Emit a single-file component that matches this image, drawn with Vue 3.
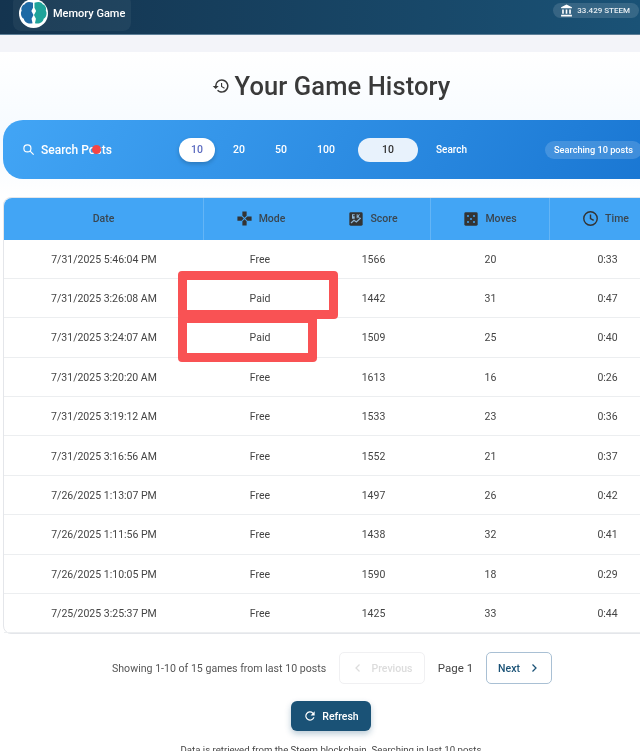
<script setup>
const rows = [
  { date: '7/31/2025 5:46:04 PM', mode: 'Free', score: 1566, moves: 20, time: '0:33' },
  { date: '7/31/2025 3:26:08 AM', mode: 'Paid', score: 1442, moves: 31, time: '0:47' },
  { date: '7/31/2025 3:24:07 AM', mode: 'Paid', score: 1509, moves: 25, time: '0:40' },
  { date: '7/31/2025 3:20:20 AM', mode: 'Free', score: 1613, moves: 16, time: '0:26' },
  { date: '7/31/2025 3:19:12 AM', mode: 'Free', score: 1533, moves: 23, time: '0:36' },
  { date: '7/31/2025 3:16:56 AM', mode: 'Free', score: 1552, moves: 21, time: '0:37' },
  { date: '7/26/2025 1:13:07 PM', mode: 'Free', score: 1497, moves: 26, time: '0:42' },
  { date: '7/26/2025 1:11:56 PM', mode: 'Free', score: 1438, moves: 32, time: '0:41' },
  { date: '7/26/2025 1:10:05 PM', mode: 'Free', score: 1590, moves: 18, time: '0:29' },
  { date: '7/25/2025 3:25:37 PM', mode: 'Free', score: 1425, moves: 33, time: '0:44' }
]
const counts = [10, 20, 50, 100]
const lobe = 'M14.500 4C10 2 6.500 3.500 6 5.500 3 6.500 1.800 10 2.800 12 1 15 2.500 19.500 5 20.500 5.500 24 10 26.500 14 25L13 20.500l2-4-2.200-4 1.700-3.500z'
</script>

<template>
  <div class="page">
    <header class="topbar">
      <div class="brand">
        <svg class="logo" viewBox="0 0 30 30" width="29" height="29">
          <circle cx="15" cy="15" r="15" fill="#fff" />
          <path :d="lobe" fill="#1e6aa5" />
          <path :d="lobe" fill="#1fa39a" transform="matrix(-1 0 0 1 30.500 0)" />
        </svg>
        <span>Memory Game</span>
      </div>
      <div class="balance">
        <svg viewBox="0 0 24 24" width="13" height="13"><path fill="#fff" d="M12 1 2 6v2h20V6zM4 10v8h3v-8zm6.500 0v8h3v-8zm6.500 0v8h3v-8zM2 20v3h20v-3z" /></svg>
        <span>33.429 STEEM</span>
      </div>
    </header>

    <div class="strip"></div>

    <main class="card">
      <h1 class="title">
        <svg viewBox="0 0 24 24" width="18" height="18"><path fill="#383838" d="M13 3a9 9 0 0 0-9 9H1l3.900 3.900L9 12H6a7 7 0 1 1 2.100 5l-1.400 1.400A9 9 0 1 0 13 3zm-1 5v5l4.300 2.500.7-1.200-3.500-2.100V8z" /></svg>
        <span>Your Game History</span>
      </h1>

      <section class="search">
        <div class="search-label">
          <svg viewBox="0 0 24 24" width="13" height="13"><circle cx="10" cy="10" r="6.500" fill="none" stroke="#fff" stroke-width="2.200" /><path d="m15 15 6.500 6.500" stroke="#fff" stroke-width="2.200" /></svg>
          <span class="label-text">Search Posts<i class="dot"></i></span>
        </div>
        <div class="counts">
          <span v-for="(c, i) in counts" :key="c" class="count" :class="{ active: i === 0 }">{{ c }}</span>
        </div>
        <div class="count-input">10</div>
        <span class="search-btn">Search</span>
        <span class="searching">Searching 10 posts</span>
      </section>

      <section class="table">
        <div class="thead">
          <div class="th bordered">Date</div>
          <div class="th mode-head">
            <svg viewBox="0 0 24 24" width="17" height="17"><path fill="#333" d="M9 2h6v6l-3 3-3-3zM9 22h6v-6l-3-3-3 3zM2 9v6h6l3-3-3-3zM22 9v6h-6l-3-3 3-3z" /></svg>
            Mode
          </div>
          <div class="th bordered">
            <svg viewBox="0 0 24 24" width="16" height="16"><rect x="2" y="2" width="20" height="20" rx="2" fill="#333" /><path d="m4.500 18 4.500-4 3.500 2.500 6.500-6" stroke="#8fb6d6" stroke-width="1.800" fill="none" /><path d="M6 5h4v1.500H7.500V8H10v3.500H6zM13 5h1.500v2.500L16.500 5H18l-2 3 2 3h-1.500l-2-2.500V11H13z" fill="#8fb6d6" /></svg>
            Score
          </div>
          <div class="th bordered">
            <svg viewBox="0 0 24 24" width="16" height="16"><rect x="2" y="2" width="20" height="20" rx="2" fill="#333" /><g fill="#42a5f5"><circle cx="7.500" cy="7.500" r="1.500" /><circle cx="16.500" cy="7.500" r="1.500" /><circle cx="12" cy="12" r="1.500" /><circle cx="7.500" cy="16.500" r="1.500" /><circle cx="16.500" cy="16.500" r="1.500" /></g></svg>
            Moves
          </div>
          <div class="th time-head">
            <svg viewBox="0 0 24 24" width="17" height="17"><circle cx="12" cy="12" r="9.500" fill="none" stroke="#333" stroke-width="2" /><path d="M12 6.500V12l4.500 2.700" fill="none" stroke="#333" stroke-width="2" /></svg>
            Time
          </div>
        </div>
        <div v-for="r in rows" :key="r.date" class="tr">
          <div>{{ r.date }}</div>
          <div>{{ r.mode }}</div>
          <div>{{ r.score }}</div>
          <div>{{ r.moves }}</div>
          <div>{{ r.time }}</div>
        </div>
        <div class="mark mark-a"></div>
        <div class="mark mark-b"></div>
      </section>

      <section class="pager">
        <span class="showing">Showing 1-10 of 15 games from last 10 posts</span>
        <span class="page-btn prev">
          <svg viewBox="0 0 24 24" width="12" height="12"><path d="m15 5-7 7 7 7" fill="none" stroke="#dcdcdc" stroke-width="2.500" /></svg>
          Previous
        </span>
        <span class="page-num">Page 1</span>
        <span class="page-btn next">
          Next
          <svg viewBox="0 0 24 24" width="12" height="12"><path d="m9 5 7 7-7 7" fill="none" stroke="#1a5276" stroke-width="2.500" /></svg>
        </span>
      </section>

      <div class="refresh-row">
        <span class="refresh">
          <svg viewBox="0 0 24 24" width="14" height="14"><path fill="#fff" d="M17.650 6.350A8 8 0 1 0 19.700 14h-2.100a6 6 0 1 1-1.400-6.200L13 11h7V4z" /></svg>
          Refresh
        </span>
      </div>

      <p class="note">Data is retrieved from the Steem blockchain. Searching in last 10 posts</p>
    </main>
  </div>
</template>

<style>
html, body { margin: 0; overflow: hidden; background: #fff; }
</style>

<style scoped>
.page {
  width: 640px;
  height: 751px;
  overflow: hidden;
  font-family: Roboto, "Liberation Sans", sans-serif;
  color: #333;
  filter: blur(0.35px);
}

.topbar {
  height: 34px;
  display: flex;
  justify-content: space-between;
  align-items: center;
  padding: 0 1px 0 13px;
  background: linear-gradient(90deg, #14344f, #1a5276);
  border-bottom: 1px solid #5d7f98;
}

.brand {
  display: flex;
  align-items: center;
  gap: 5px;
  height: 36px;
  margin-top: -8px;
  padding: 0 6px;
  border-radius: 8px;
  background: rgba(255, 255, 255, 0.05);
  color: #fff;
  font-size: 11px;
  font-weight: 500;
}

.balance {
  display: flex;
  align-items: center;
  gap: 4px;
  height: 15px;
  margin-top: -13px;
  padding: 0 9px 0 7px;
  border-radius: 8px;
  background: rgba(255, 255, 255, 0.13);
  color: #e8eef3;
  font-size: 8px;
  font-weight: 500;
}

.strip {
  height: 17px;
  background: #f3f4f9;
}

.card {
  width: 662px;
  background: linear-gradient(#fff, #f5faff 90px, #fff 145px);
}

.title {
  margin: 0;
  height: 68px;
  display: flex;
  justify-content: center;
  align-items: center;
  gap: 5px;
  font-size: 25.500px;
  font-weight: 500;
  letter-spacing: 0.1px;
  color: #3a3a3a;
}

.search {
  height: 59px;
  margin-left: 3px;
  display: flex;
  align-items: center;
  border-radius: 20px 0 0 20px;
  background: linear-gradient(120deg, #42a5f5, #1976d2);
  color: #fff;
}

.search-label {
  display: flex;
  align-items: center;
  gap: 6px;
  width: 157px;
  padding-left: 19px;
  box-sizing: border-box;
  font-size: 12px;
  font-weight: 500;
}

.label-text {
  position: relative;
}

.dot {
  position: absolute;
  left: 51px;
  top: 2px;
  width: 9px;
  height: 9px;
  border-radius: 50%;
  background: #f44545;
}

.counts {
  display: flex;
  align-items: center;
  width: 179px;
  margin-left: 19px;
  font-size: 10.500px;
  font-weight: 500;
}

.count {
  width: 42px;
  text-align: center;
}

.count.active {
  width: 36px;
  height: 24px;
  margin-right: 3px;
  line-height: 24px;
  border-radius: 12px;
  background: #fff;
  color: #5c6bc0;
  box-shadow: 0 2px 4px rgba(0, 0, 0, 0.2);
}

.count:last-child {
  margin-left: 3px;
}

.count-input {
  width: 60px;
  height: 24px;
  line-height: 24px;
  text-align: center;
  border-radius: 12px;
  background: #e8f2fc;
  color: #333;
  font-size: 10.500px;
  font-weight: 500;
}

.search-btn {
  margin-left: 18px;
  font-size: 10px;
  font-weight: 500;
}

.searching {
  margin-left: 78px;
  padding: 0 9px;
  height: 18px;
  line-height: 18px;
  border-radius: 9px;
  background: rgba(255, 255, 255, 0.16);
  font-size: 9.200px;
  font-weight: 500;
  white-space: nowrap;
}

.table {
  position: relative;
  margin: 18px 0 0 3px;
  border: 1px solid #e4e6ea;
  border-radius: 8px 0 0 8px;
}

.thead,
.tr {
  display: grid;
  grid-template-columns: 200px 112px 115px 119px 115px;
}

.thead {
  height: 41.500px;
  background: #42a5f5;
  border-radius: 8px 0 0 0;
}

.th {
  display: flex;
  align-items: center;
  justify-content: center;
  gap: 6px;
  font-size: 10.500px;
  font-weight: 500;
  color: #3a4650;
}

.th.bordered {
  border-right: 1px solid #64b5f6;
}

.time-head {
  padding-right: 4px;
}

.mode-head {
  padding-left: 1px;
}

.tr {
  height: 39.400px;
  box-sizing: border-box;
  border-bottom: 1px solid #eceef0;
  font-size: 10.500px;
  color: #444;
}

.tr > div {
  padding-top: 1px;
}

.tr:last-of-type {
  border-bottom: none;
}

.tr > div {
  display: flex;
  align-items: center;
  justify-content: center;
}

.mark {
  position: absolute;
  box-sizing: border-box;
  border: 9px solid #f95254;
  border-radius: 4px;
}

.mark-a {
  left: 174px;
  top: 73px;
  width: 160px;
  height: 48px;
}

.mark-b {
  left: 174px;
  top: 116px;
  width: 139px;
  height: 48px;
}

.pager {
  display: flex;
  align-items: center;
  height: 32px;
  margin-top: 18px;
  padding-left: 112px;
}

.showing {
  width: 227px;
  font-size: 10.600px;
  white-space: nowrap;
  color: #555;
}

.page-btn {
  display: flex;
  align-items: center;
  justify-content: center;
  box-sizing: border-box;
  height: 32px;
  border-radius: 5px;
  font-size: 10.500px;
  font-weight: 500;
}

.prev {
  width: 86px;
  gap: 8px;
  border: 1px solid #f0f0f2;
  color: #dcdcdc;
}

.page-num {
  width: 61px;
  text-align: center;
  font-size: 11.500px;
  color: #444;
}

.next {
  width: 66px;
  gap: 8px;
  border: 1px solid #a9c0d4;
  color: #1a5276;
}

.refresh-row {
  display: flex;
  justify-content: center;
  margin-top: 17px;
}

.refresh {
  display: flex;
  align-items: center;
  justify-content: center;
  gap: 5px;
  width: 80px;
  height: 30px;
  border-radius: 6px;
  background: #1a5276;
  box-shadow: 0 3px 6px rgba(26, 82, 118, 0.3);
  color: #fff;
  font-size: 10.500px;
  font-weight: 500;
}

.note {
  margin: 13px 0 0;
  text-align: center;
  font-size: 9.600px;
  color: #444;
}
</style>
